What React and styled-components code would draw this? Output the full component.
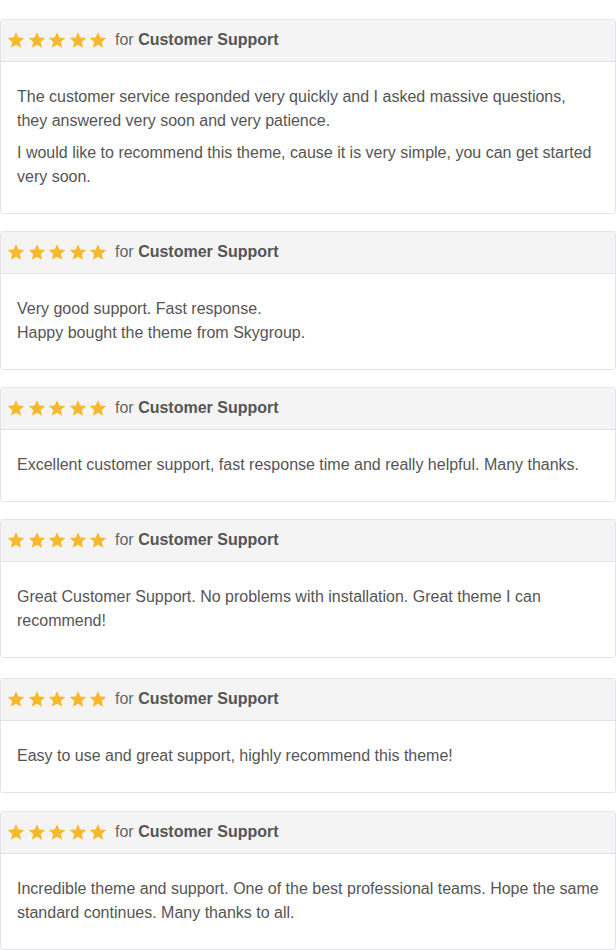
import styled, { createGlobalStyle } from 'styled-components';

const GlobalStyle = createGlobalStyle`
  body {
    margin: 0;
    background: #fff;
    font-family: Arial, "Liberation Sans", sans-serif;
  }
`;

const List = styled.div`
  display: flex;
  flex-direction: column;
  gap: 17px;
  padding-top: 19px;
  width: 616px;
`;

const Card = styled.article`
  margin-top: ${({ $extra }) => $extra || 0}px;
  border: 1px solid #e1e5ea;
  border-radius: 3px;
  background: #fff;
  overflow: hidden;
`;

const Header = styled.div`
  display: flex;
  align-items: center;
  box-sizing: border-box;
  height: 42px;
  padding: 0 8px 2px 6px;
  background: #f4f4f4;
  border-bottom: 1px solid #e1e5ea;
  font-size: 16px;
  color: #666;
`;

const Stars = styled.div`
  display: flex;
  gap: 2.5px;
  margin-right: 8px;
`;

const Title = styled.span`
  strong {
    color: #555;
    font-weight: bold;
  }
`;

const Body = styled.div`
  padding: 23px 16px 24px;
  font-size: 16px;
  line-height: 24px;
  color: #555;

  p {
    margin: 0;
    white-space: pre-line;
  }
  p + p {
    margin-top: 8px;
  }
`;

const Star = () => (
  <svg width="18" height="18" viewBox="0 0 24 24">
    <path
      fill="#f6b82c"
      d="M12 1.5l3.1 7.3 7.9.6-6 5.2 1.9 7.7L12 18.2l-6.9 4.1L7 14.6 1 9.4l7.9-.6z"
    />
  </svg>
);

const reviews = [
  {
    id: 1,
    lines: [
      'The customer service responded very quickly and I asked massive questions, they answered very soon and very patience.',
      'I would like to recommend this theme, cause it is very simple, you can get started very soon.',
    ],
  },
  {
    id: 2,
    lines: ['Very good support. Fast response.\nHappy bought the theme from Skygroup.'],
  },
  {
    id: 3,
    lines: ['Excellent customer support, fast response time and really helpful. Many thanks.'],
  },
  {
    id: 4,
    lines: ['Great Customer Support. No problems with installation. Great theme I can recommend!'],
  },
  {
    id: 5,
    extra: 3,
    lines: ['Easy to use and great support, highly recommend this theme!'],
  },
  {
    id: 6,
    extra: 1,
    lines: [
      'Incredible theme and support. One of the best professional teams. Hope the same standard continues. Many thanks to all.',
    ],
  },
];

export default function App() {
  return (
    <>
      <GlobalStyle />
      <List>
        {reviews.map((r) => (
          <Card key={r.id} $extra={r.extra}>
            <Header>
              <Stars>
                {[0, 1, 2, 3, 4].map((i) => (
                  <Star key={i} />
                ))}
              </Stars>
              <Title>
                for <strong>Customer Support</strong>
              </Title>
            </Header>
            <Body>
              {r.lines.map((t, i) => (
                <p key={i}>{t}</p>
              ))}
            </Body>
          </Card>
        ))}
      </List>
    </>
  );
}
